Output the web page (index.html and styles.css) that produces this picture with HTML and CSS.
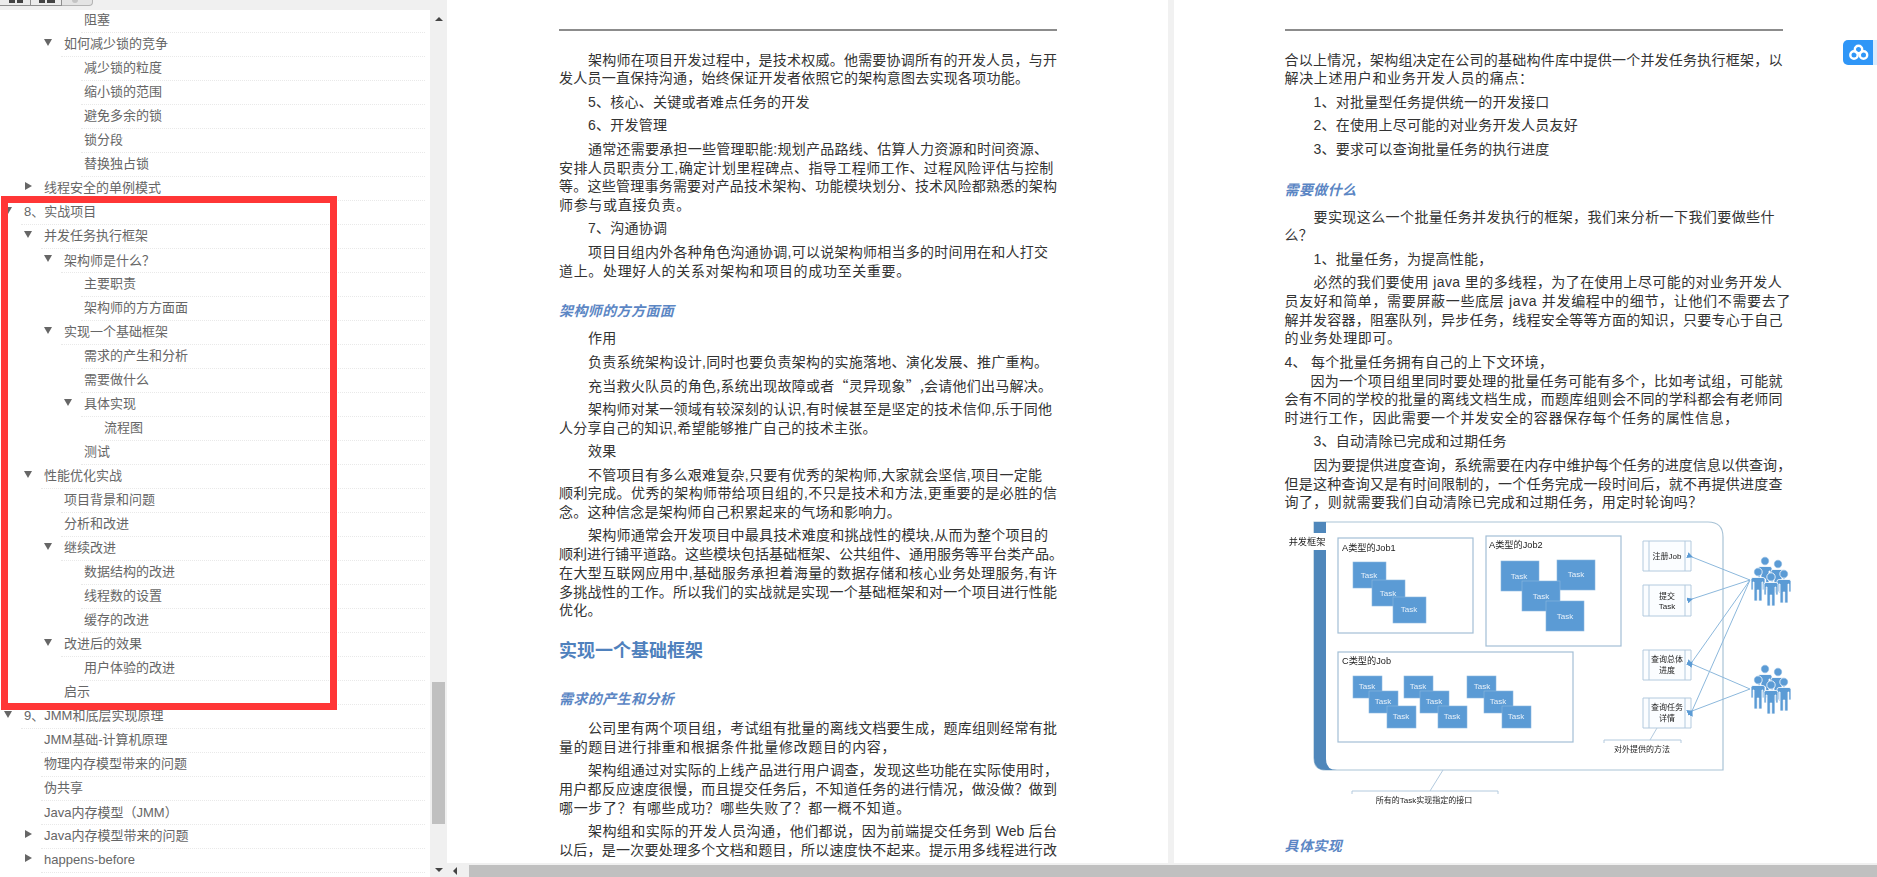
FILE: index.html
```
<!DOCTYPE html>
<html lang="zh">
<head>
<meta charset="utf-8">
<title>并发任务执行框架</title>
<link rel="stylesheet" href="styles.css">
</head>
<body>
<div class="app">
  <aside class="side">
    <div class="strip">
      <div class="tab"><i class="bk"></i><i class="bk"></i></div>
      <div class="tab tab2"><i class="bk"></i><i class="bk bk-wide"></i></div>
      <div class="tab tab3"><i class="dot"></i></div>
    </div>
    <div class="side-body">
      <nav class="tree">
        <div class="row l3"><span class="tg"></span><span class="t">阻塞</span></div>
        <div class="row l2"><span class="tg dn"></span><span class="t">如何减少锁的竞争</span></div>
        <div class="row l3"><span class="tg"></span><span class="t">减少锁的粒度</span></div>
        <div class="row l3"><span class="tg"></span><span class="t">缩小锁的范围</span></div>
        <div class="row l3"><span class="tg"></span><span class="t">避免多余的锁</span></div>
        <div class="row l3"><span class="tg"></span><span class="t">锁分段</span></div>
        <div class="row l3"><span class="tg"></span><span class="t">替换独占锁</span></div>
        <div class="row l1"><span class="tg rt"></span><span class="t">线程安全的单例模式</span></div>
        <div class="row l0"><span class="tg dn"></span><span class="t">8、实战项目</span></div>
        <div class="row l1"><span class="tg dn"></span><span class="t">并发任务执行框架</span></div>
        <div class="row l2"><span class="tg dn"></span><span class="t">架构师是什么<span class="fw">？</span></span></div>
        <div class="row l3"><span class="tg"></span><span class="t">主要职责</span></div>
        <div class="row l3"><span class="tg"></span><span class="t">架构师的方方面面</span></div>
        <div class="row l2"><span class="tg dn"></span><span class="t">实现一个基础框架</span></div>
        <div class="row l3"><span class="tg"></span><span class="t">需求的产生和分析</span></div>
        <div class="row l3"><span class="tg"></span><span class="t">需要做什么</span></div>
        <div class="row l3"><span class="tg dn"></span><span class="t">具体实现</span></div>
        <div class="row l4"><span class="tg"></span><span class="t">流程图</span></div>
        <div class="row l3"><span class="tg"></span><span class="t">测试</span></div>
        <div class="row l1"><span class="tg dn"></span><span class="t">性能优化实战</span></div>
        <div class="row l2"><span class="tg"></span><span class="t">项目背景和问题</span></div>
        <div class="row l2"><span class="tg"></span><span class="t">分析和改进</span></div>
        <div class="row l2"><span class="tg dn"></span><span class="t">继续改进</span></div>
        <div class="row l3"><span class="tg"></span><span class="t">数据结构的改进</span></div>
        <div class="row l3"><span class="tg"></span><span class="t">线程数的设置</span></div>
        <div class="row l3"><span class="tg"></span><span class="t">缓存的改进</span></div>
        <div class="row l2"><span class="tg dn"></span><span class="t">改进后的效果</span></div>
        <div class="row l3"><span class="tg"></span><span class="t">用户体验的改进</span></div>
        <div class="row l2"><span class="tg"></span><span class="t">启示</span></div>
        <div class="row l0"><span class="tg dn"></span><span class="t">9、JMM和底层实现原理</span></div>
        <div class="row l1"><span class="tg"></span><span class="t">JMM基础-计算机原理</span></div>
        <div class="row l1"><span class="tg"></span><span class="t">物理内存模型带来的问题</span></div>
        <div class="row l1"><span class="tg"></span><span class="t">伪共享</span></div>
        <div class="row l1"><span class="tg"></span><span class="t">Java内存模型<span class="fw">（</span>JMM<span class="fw">）</span></span></div>
        <div class="row l1"><span class="tg rt"></span><span class="t">Java内存模型带来的问题</span></div>
        <div class="row l1"><span class="tg rt"></span><span class="t">happens-before</span></div>
        <div class="row l1"><span class="tg"></span><span class="t">&nbsp;</span></div>
      </nav>
      <div class="vbar">
        <span class="arr-up"></span>
        <span class="vthumb"></span>
        <span class="arr-dn"></span>
      </div>
    </div>
  </aside>
  <main class="view">
    <div class="pages">
      <article class="page">
        <hr class="rule">
        <p class="in"><span class="ln j">架构师在项目开发过程中，是技术权威。他需要协调所有的开发人员，与开</span><span class="nl">发人员一直保持沟通，始终保证开发者依照它的架构意图去实现各项功能。</span></p>
        <p class="in">5、核心、关键或者难点任务的开发</p>
        <p class="in">6、开发管理</p>
        <p class="in"><span class="ln">通常还需要承担一些管理职能:规划产品路线、估算人力资源和时间资源、</span><span class="nl m">安排人员职责分工,确定计划里程碑点、指导工程师工作、过程风险评估与控制</span><span class="nl j">等。这些管理事务需要对产品技术架构、功能模块划分、技术风险都熟悉的架构</span><span class="nl w">师参与或直接负责。</span></p>
        <p class="in">7、沟通协调</p>
        <p class="in"><span class="ln">项目目组内外各种角色沟通协调,可以说架构师相当多的时间用在和人打交</span><span class="nl w">道上。处理好人的关系对架构和项目的成功至关重要。</span></p>
        <h3 class="h3">架构师的方方面面</h3>
        <p class="in">作用</p>
        <p class="in">负责系统架构设计,同时也要负责架构的实施落地、演化发展、推广重构。</p>
        <p class="in q">充当救火队员的角色,系统出现故障或者“灵异现象”,会请他们出马解决。</p>
        <p class="in"><span class="ln">架构师对某一领域有较深刻的认识,有时候甚至是坚定的技术信仰,乐于同他</span><span class="nl">人分享自己的知识,希望能够推广自己的技术主张。</span></p>
        <p class="in">效果</p>
        <p class="in"><span class="ln">不管项目有多么艰难复杂,只要有优秀的架构师,大家就会坚信,项目一定能</span><span class="nl j">顺利完成。优秀的架构师带给项目组的,不只是技术和方法,更重要的是必胜的信</span><span class="nl">念。这种信念是架构师自己积累起来的气场和影响力。</span></p>
        <p class="in"><span class="ln">架构师通常会开发项目中最具技术难度和挑战性的模块,从而为整个项目的</span><span class="nl j">顺利进行铺平道路。这些模块包括基础框架、公共组件、通用服务等平台类产品。</span><span class="nl j">在大型互联网应用中,基础服务承担着海量的数据存储和核心业务处理服务,有许</span><span class="nl j">多挑战性的工作。所以我们的实战就是实现一个基础框架和对一个项目进行性能</span><span class="nl">优化。</span></p>
        <h2 class="h2">实现一个基础框架</h2>
        <h3 class="h3 h3b">需求的产生和分析</h3>
        <p class="in"><span class="ln j">公司里有两个项目组，考试组有批量的离线文档要生成，题库组则经常有批</span><span class="nl w">量的题目进行排重和根据条件批量修改题目的内容，</span></p>
        <p class="in"><span class="ln">架构组通过对实际的上线产品进行用户调查，发现这些功能在实际使用时，</span><span class="nl j">用户都反应速度很慢，而且提交任务后，不知道任务的进行情况，做没做？做到</span><span class="nl w">哪一步了？有哪些成功？哪些失败了？都一概不知道。</span></p>
        <p class="in"><span class="ln j">架构组和实际的开发人员沟通，他们都说，因为前端提交任务到 Web 后台</span><span class="nl j">以后，是一次要处理多个文档和题目，所以速度快不起来。提示用多线程进行改</span></p>
      </article>
      <article class="page">
        <hr class="rule">
        <p class="in0"><span class="nl j">合以上情况，架构组决定在公司的基础构件库中提供一个并发任务执行框架，以</span><span class="nl w">解决上述用户和业务开发人员的痛点：</span></p>
        <p class="in">1、对批量型任务提供统一的开发接口</p>
        <p class="in">2、在使用上尽可能的对业务开发人员友好</p>
        <p class="in">3、要求可以查询批量任务的执行进度</p>
        <h3 class="h3">需要做什么</h3>
        <p class="in"><span class="ln m">要实现这么一个批量任务并发执行的框架，我们来分析一下我们要做些什</span><span class="nl">么？</span></p>
        <p class="in">1、批量任务，为提高性能，</p>
        <p class="in"><span class="ln m">必然的我们要使用 java 里的多线程，为了在使用上尽可能的对业务开发人</span><span class="nl w">员友好和简单，需要屏蔽一些底层 java 并发编程中的细节，让他们不需要去了</span><span class="nl j">解并发容器，阻塞队列，异步任务，线程安全等等方面的知识，只要专心于自己</span><span class="nl w">的业务处理即可。</span></p>
        <p class="in0 tight">4、 每个批量任务拥有自己的上下文环境，</p>
        <p class="in2"><span class="ln j">因为一个项目组里同时要处理的批量任务可能有多个，比如考试组，可能就</span><span class="nl j">会有不同的学校的批量的离线文档生成，而题库组则会不同的学科都会有老师同</span><span class="nl w">时进行工作，因此需要一个并发安全的容器保存每个任务的属性信息，</span></p>
        <p class="in">3、自动清除已完成和过期任务</p>
        <p class="in"><span class="ln o">因为要提供进度查询，系统需要在内存中维护每个任务的进度信息以供查询，</span><span class="nl j">但是这种查询又是有时间限制的，一个任务完成一段时间后，就不再提供进度查</span><span class="nl m">询了，则就需要我们自动清除已完成和过期任务，用定时轮询吗？</span></p>
        <svg class="diagram" viewBox="1284 518 520 298" width="520" height="298" aria-label="并发框架">
          <defs>
            <marker id="ah" markerWidth="6" markerHeight="6" refX="1" refY="3" orient="auto-start-reverse"><path class="ah" d="M6 0L0 3L6 6z"/></marker>
            <g id="person"><circle class="pp" r="4.2"/><path class="pp" d="M-5 5.5h10q2 0 2 2V18h-2.2v-8h-.8V29H.7V18H-.7V29H-4V10h-.8v8H-7V7.5q0-2 2-2z"/></g>
            <g id="people">
              <use href="#person" x="1764" y="562"/><use href="#person" x="1777" y="565"/>
              <use href="#person" x="1757" y="573"/><use href="#person" x="1783" y="575"/>
              <use href="#person" x="1770" y="578"/>
            </g>
          </defs>
          <path class="fr" d="M1313 523H1707Q1722 523 1722 538V771H1325Q1313 771 1313 759z"/>
          <path class="bar" d="M1313 523H1325V760Q1325 771 1336 771H1325Q1313 771 1313 759z"/>
          <rect class="wh" x="1289" y="534" width="36" height="17"/>
          <text class="lb" x="1306" y="546" text-anchor="middle">并发框架</text>

          <rect class="bx" x="1337" y="539" width="135" height="95"/>
          <text class="lb" x="1341" y="552">A类型的Job1</text>
          <rect class="tk" x="1352" y="563" width="33" height="26"/><text class="tt" x="1368" y="579">Task</text>
          <rect class="tk" x="1371" y="581" width="33" height="26"/><text class="tt" x="1387" y="597">Task</text>
          <rect class="tk" x="1392" y="598" width="33" height="26"/><text class="tt" x="1408" y="613">Task</text>

          <rect class="bx" x="1485" y="537" width="135" height="110"/>
          <text class="lb" x="1488" y="549">A类型的Job2</text>
          <rect class="tk" x="1500" y="562" width="38" height="30"/><text class="tt" x="1518" y="580">Task</text>
          <rect class="tk" x="1556" y="561" width="38" height="30"/><text class="tt" x="1575" y="578">Task</text>
          <rect class="tk" x="1521" y="582" width="38" height="30"/><text class="tt" x="1540" y="600">Task</text>
          <rect class="tk" x="1545" y="602" width="38" height="30"/><text class="tt" x="1564" y="620">Task</text>

          <rect class="bx" x="1337" y="653" width="235" height="90"/>
          <text class="lb" x="1341" y="665">C类型的Job</text>
          <rect class="tk" x="1352" y="677" width="29" height="22"/><text class="tt" x="1366" y="690">Task</text>
          <rect class="tk" x="1368" y="692" width="29" height="22"/><text class="tt" x="1382" y="705">Task</text>
          <rect class="tk" x="1386" y="707" width="29" height="22"/><text class="tt" x="1400" y="720">Task</text>
          <rect class="tk" x="1403" y="677" width="29" height="22"/><text class="tt" x="1417" y="690">Task</text>
          <rect class="tk" x="1419" y="692" width="29" height="22"/><text class="tt" x="1433" y="705">Task</text>
          <rect class="tk" x="1437" y="707" width="29" height="22"/><text class="tt" x="1451" y="720">Task</text>
          <rect class="tk" x="1466" y="677" width="29" height="22"/><text class="tt" x="1481" y="690">Task</text>
          <rect class="tk" x="1483" y="692" width="29" height="22"/><text class="tt" x="1497" y="705">Task</text>
          <rect class="tk" x="1501" y="707" width="29" height="22"/><text class="tt" x="1515" y="720">Task</text>

          <path class="ib" d="M1642 542h48v30h-48zM1648 542v30M1684 542v30"/>
          <text class="lc" x="1666" y="560">注册Job</text>
          <path class="ib" d="M1642 586h48v31h-48zM1648 586v31M1684 586v31"/>
          <text class="lc" x="1666" y="600">提交</text><text class="lc" x="1666" y="610">Task</text>
          <path class="ib" d="M1642 651h48v30h-48zM1648 651v30M1684 651v30"/>
          <text class="lc" x="1666" y="663">查询总体</text><text class="lc" x="1666" y="674">进度</text>
          <path class="ib" d="M1642 699h48v30h-48zM1648 699v30M1684 699v30"/>
          <text class="lc" x="1666" y="711">查询任务</text><text class="lc" x="1666" y="722">详情</text>

          <path class="cn" d="M1656 729L1649 741M1603 744V741H1680V744"/>
          <text class="lc" x="1641" y="753">对外提供的方法</text>
          <path class="cn" d="M1442 771L1429 792M1351 795V792H1497V795"/>
          <text class="lc" x="1423" y="804">所有的Task实现指定的接口</text>

          <line class="ar" x1="1749" y1="581" x2="1691" y2="558"/>
          <line class="ar" x1="1749" y1="581" x2="1691" y2="600"/>
          <line class="ar" x1="1749" y1="581" x2="1691" y2="663"/>
          <line class="ar" x1="1749" y1="581" x2="1691" y2="712"/>
          <line class="ar" x1="1749" y1="690" x2="1691" y2="665"/>
          <line class="ar" x1="1749" y1="690" x2="1691" y2="712"/>
          <use href="#people"/>
          <use href="#people" y="108"/>
        </svg>
        <h3 class="h3">具体实现</h3>
      </article>
    </div>
    <div class="hbar">
      <span class="hleft"><span class="arr-lf"></span></span>
      <span class="hthumb"></span>
    </div>
  </main>
</div>
<div class="redbox"></div>
<div class="cloud">
  <span class="cloud-ic">
    <svg viewBox="0 0 30 25" width="30" height="25"><circle class="cl" cx="11" cy="15" r="3.7"/><circle class="cl" cx="20.5" cy="15" r="3.7"/><circle class="cl" cx="15.5" cy="9.5" r="3.7"/></svg>
  </span>
  <span class="cloud-ed"></span>
</div>
</body>
</html>
```
FILE: styles.css
```
html, body { margin: 0; height: 100%; overflow: hidden; background: #fff; }
.app { display: flex; height: 877px; width: 1877px; }

/* sidebar */
.side { width: 447px; flex: none; display: flex; flex-direction: column; background: #f0f0f0; }
.strip { height: 10px; flex: none; display: flex; align-items: flex-start; }
.tab { width: 31px; height: 6px; display: flex; gap: 2px; padding-left: 9px; box-sizing: border-box; background: #ececec; border-right: 1px solid #8f8f8f; border-bottom: 1px solid #8f8f8f; overflow: hidden; }
.tab2 { padding-left: 8px; }
.tab3 { background: #e4e4e4; border-color: #b4b4b4; border-bottom-right-radius: 4px; padding-left: 10px; }
.bk { display: block; width: 6px; height: 3px; background: #444; }
.bk-wide { width: 8px; }
.dot { display: block; width: 6px; height: 3px; background: #c4c4c4; border-radius: 0 0 3px 3px; }
.side-body { flex: 1; display: flex; min-height: 0; }
.tree { width: 430px; flex: none; background: #fff; overflow: hidden; padding-right: 5px; box-sizing: border-box; font: 13px/21px "Liberation Sans", "Noto Sans CJK SC", sans-serif; color: #666; }
.row { display: flex; height: 24px; }
.row:first-child { margin-top: -1px; }
.l0 { margin-left: 4px; }
.l1 { margin-left: 24px; }
.l2 { margin-left: 44px; }
.l3 { margin-left: 64px; }
.l4 { margin-left: 84px; }
.tg { flex: none; width: 17px; height: 24px; position: relative; }
.dn::before { content: ""; position: absolute; left: 0; top: 6px; border-style: solid; border-width: 7px 4.5px 0; border-color: #666 transparent transparent; }
.rt::before { content: ""; position: absolute; left: 1px; top: 5px; border-style: solid; border-width: 4.5px 0 4.5px 7px; border-color: transparent transparent transparent #666; }
.t { flex: 1; padding-left: 3px; box-sizing: border-box; border-bottom: 1px dotted #e9e9e9; white-space: nowrap; }
.fw { font-family: "Noto Sans CJK TC", sans-serif; }
.vbar { width: 17px; flex: none; display: flex; flex-direction: column; align-items: center; }
.arr-up { margin-top: 7px; border-style: solid; border-width: 0 4px 4px; border-color: transparent transparent #444; }
.vthumb { width: 13px; height: 142px; margin-top: 661px; background: #c0c0c0; }
.arr-dn { margin-top: 44px; border-style: solid; border-width: 4px 4px 0; border-color: #444 transparent transparent; }

/* viewer */
.view { flex: 1; min-width: 0; display: flex; flex-direction: column; }
.pages { flex: 1; min-height: 0; display: flex; gap: 6px; background: #f1f1f1; overflow: hidden; }
.page { flex: none; width: 721px; box-sizing: border-box; padding: 29px 0 0 112px; background: #fff; font: 14px/18.7px "Liberation Sans", "Noto Sans CJK SC", sans-serif; color: #333; letter-spacing: .25px; white-space: nowrap; }
.page + .page { padding-left: 110.5px; }
.rule { width: 498px; height: 2px; margin: 0 0 19.6px; border: 0; background: #8c8c8c; }
.page p { width: 498px; margin: 0 0 4.8px; box-sizing: border-box; }
.page p.tight { margin-bottom: 0; }
.in { padding-left: 29px; }
.in0 { padding-left: 0; }
.in2 { padding-left: 26px; }
.ln, .nl { display: block; }
.nl { margin-left: -29px; }
.in2 .nl { margin-left: -26px; }
.in0 .nl { margin-left: 0; }
.w { letter-spacing: .66px; }
.m { letter-spacing: .42px; }
.o { letter-spacing: .05px; }
.j { text-align-last: justify; letter-spacing: 0; }
.q { font-family: "Noto Sans CJK SC", sans-serif; }
.h3 { margin: 22px 0 8px; font: italic bold 14px/19px "Liberation Sans", "Noto Sans CJK SC", sans-serif; color: #5b86c4; letter-spacing: .4px; }
.h3b { margin-bottom: 10px; }
.h2 { margin: 18.6px 0 27.5px; font: bold 18px/24px "Liberation Sans", "Noto Sans CJK SC", sans-serif; color: #4f81bd; letter-spacing: 0; }
.hbar { height: 14px; flex: none; display: flex; align-items: flex-end; background: #f0f0f0; }
.hleft { width: 22px; height: 12px; flex: none; display: flex; align-items: center; padding-left: 6px; box-sizing: border-box; }
.arr-lf { border-style: solid; border-width: 4px 4px 4px 0; border-color: transparent #444 transparent transparent; }
.hthumb { flex: 1; height: 12px; background: #c0c0c0; }

/* diagram */
.diagram { display: block; filter: blur(.35px); letter-spacing: 0; font-family: "Liberation Sans", "Noto Sans CJK SC", sans-serif; }
.fr { fill: #fff; stroke: #a9c3d6; stroke-width: 1.2; }
.bar { fill: #4f87bb; }
.wh { fill: #fff; }
.bx { fill: #fff; stroke: #a3bfd6; stroke-width: 1.2; }
.tk { fill: #5b9bd5; stroke: #8db8df; stroke-width: .6; }
.tt { fill: #e8f1fa; font-size: 8px; text-anchor: middle; }
.lb { fill: #222; font-size: 9.2px; }
.lc { fill: #222; font-size: 8px; text-anchor: middle; }
.ib { fill: #fbfdff; stroke: #b3cade; stroke-width: 1; }
.cn { fill: none; stroke: #b3cade; stroke-width: 1; }
.ar { stroke: #8cb8dc; stroke-width: 1; marker-end: url(#ah); }
.ah { fill: #5b9bd5; }
.pp { fill: #5b9bd5; stroke: #fff; stroke-width: .8; }

/* overlays */
.redbox { position: absolute; left: 1px; top: 196px; width: 336px; height: 514px; box-sizing: border-box; border: 7px solid #ff3636; }
.cloud { position: absolute; right: 0; top: 40px; display: flex; height: 25px; }
.cloud-ic { width: 30px; height: 25px; background: #2f96f7; border-radius: 5px 0 0 5px; }
.cloud-ic svg { display: block; }
.cloud-ed { width: 4px; background: #d9ecff; }
.cl { fill: none; stroke: #fff; stroke-width: 2.4; }
```
